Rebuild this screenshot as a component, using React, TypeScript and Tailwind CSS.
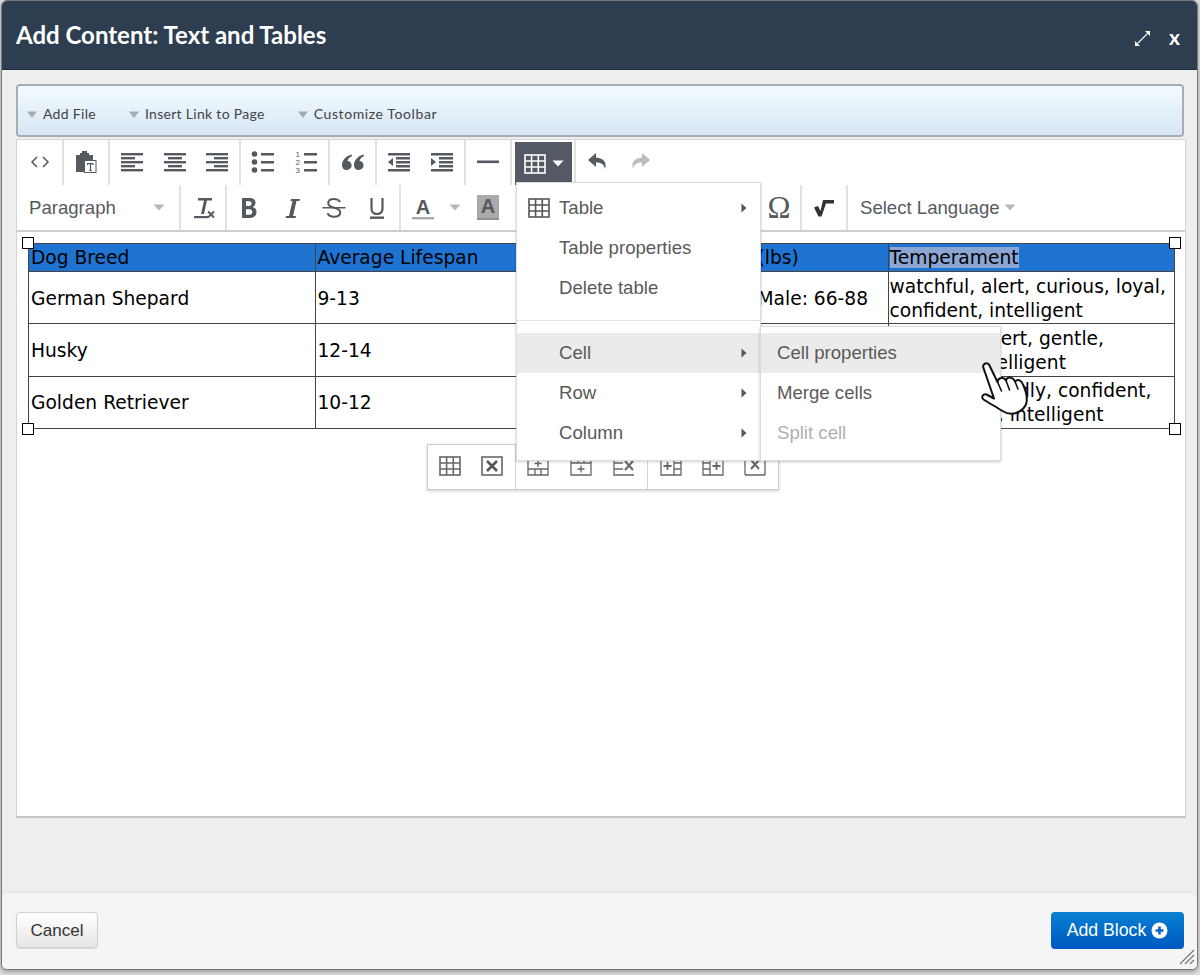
import React from "react";

const C = "#555a60";

function Ic({ w = 24, h = 24, children, className = "" }: { w?: number; h?: number; children: React.ReactNode; className?: string }) {
  return (
    <svg width={w} height={h} viewBox={`0 0 ${w} ${h}`} className={"block shrink-0 " + className}>
      {children}
    </svg>
  );
}

function Bars({ rows }: { rows: [number, number][] }) {
  return (
    <Ic w={24} h={24}>
      {rows.map(([x, w], i) => (
        <rect key={i} x={x} y={3 + i * 4} width={w} height={2.4} fill={C} />
      ))}
    </Ic>
  );
}

function Btn({ children, w = "w-[42.5px]", up = false }: { children: React.ReactNode; w?: string; up?: boolean }) {
  return <div className={`${w} h-full flex items-center justify-center shrink-0 ${up ? "pb-[2px]" : ""}`}>{children}</div>;
}

function Group({ children, className = "" }: { children: React.ReactNode; className?: string }) {
  return <div className={`flex justify-center h-full border-r-2 border-[#e2e2e2] shrink-0 ${className}`}>{children}</div>;
}

function Caret({ color = "#b3b9c0" }: { color?: string }) {
  return (
    <svg width="12" height="7" viewBox="0 0 12 7" className="block shrink-0">
      <path d="M0.5 0.5h11L6 6.5z" fill={color} />
    </svg>
  );
}

function Right() {
  return (
    <svg width="6" height="10" viewBox="0 0 6 10" className="block shrink-0">
      <path d="M0.5 0.5L5.5 5L0.5 9.5z" fill="#555" />
    </svg>
  );
}

function TableGlyph({ color = "#555", size = 22 }: { color?: string; size?: number }) {
  return (
    <svg width={size} height={size - 2} viewBox="0 0 22 20" className="block shrink-0" fill="none" stroke={color} strokeWidth="1.6">
      <rect x="1" y="1" width="20" height="18" />
      <path d="M1 7h20M1 13h20M7.6 1v18M14.3 1v18" />
    </svg>
  );
}

function MiniTable({ kind }: { kind: string }) {
  const s = "#666";
  const common = { fill: "none", stroke: s, strokeWidth: 1.3 };
  return (
    <svg width="22" height="20" viewBox="0 0 22 20" className="block shrink-0">
      {kind === "rowBefore" && (
        <g {...common}>
          <path d="M1 1v18h20V1M1 13h20M8 13v6M14 13v6" />
          <path d="M11 4v7M7.5 7.5h7" />
        </g>
      )}
      {kind === "rowAfter" && (
        <g {...common}>
          <path d="M1 1h20v18H1zM1 7h20M8 1v6M14 1v6" />
          <path d="M11 9.5v7M7.5 13h7" />
        </g>
      )}
      {kind === "rowDel" && (
        <g {...common}>
          <path d="M21 1H1v18h20M1 7h9M1 13h9" />
          <path d="M12 5l8 9M20 5l-8 9" strokeWidth="2" />
        </g>
      )}
      {kind === "colBefore" && (
        <g {...common}>
          <path d="M1 1h20v18H1zM14 1v18M14 7h7M14 13h7M1 1v18" />
          <path d="M7.5 6v8M3.5 10h8" strokeWidth="1.8" />
        </g>
      )}
      {kind === "colAfter" && (
        <g {...common}>
          <path d="M1 1h20v18H1zM8 1v18M1 7h7M1 13h7" />
          <path d="M14.5 6v8M10.5 10h8" strokeWidth="1.8" />
        </g>
      )}
      {kind === "colDel" && (
        <g {...common}>
          <path d="M1 19V1M21 19V1M1 19h20M1 1h4M17 1h4" />
          <path d="M7 4l8 9M15 4l-8 9" strokeWidth="2" />
        </g>
      )}
    </svg>
  );
}

function Row1() {
  return (
    <div className="flex h-[45px] items-stretch">
      <Group className="w-[47px]">
        <Btn up>
          <Ic w={20} h={14}>
            <path d="M7 2L2 7l5 5M13 2l5 5-5 5" fill="none" stroke={C} strokeWidth="1.6" />
          </Ic>
        </Btn>
      </Group>
      <Group className="w-[46px]">
        <Btn up>
          <Ic w={22} h={24}>
            <path d="M1 5h4V3h2V1h5v2h2v2h4v5h-8v12H1z" fill={C} />
            <rect x="9.5" y="10.5" width="11.5" height="12" fill="#fff" stroke={C} />
            <path d="M12 13h6.5v2h-1v-.8h-1.4v6h1v.9h-3.2v-.9h1v-6H13v.8h-1z" fill={C} />
          </Ic>
        </Btn>
      </Group>
      <Group className="w-[131px]">
        <Btn up><Bars rows={[[1, 22], [1, 14], [1, 22], [1, 14], [1, 22]]} /></Btn>
        <Btn up><Bars rows={[[1, 22], [5, 14], [1, 22], [5, 14], [1, 22]]} /></Btn>
        <Btn up><Bars rows={[[1, 22], [9, 14], [1, 22], [9, 14], [1, 22]]} /></Btn>
      </Group>
      <Group className="w-[89px]">
        <Btn up>
          <Ic w={24} h={24}>
            <circle cx="3.5" cy="4" r="2.8" fill={C} />
            <circle cx="3.5" cy="12" r="2.8" fill={C} />
            <circle cx="3.5" cy="20" r="2.8" fill={C} />
            <path d="M10 3h13v2.4H10zM10 11h13v2.4H10zM10 19h13v2.4H10z" fill={C} />
          </Ic>
        </Btn>
        <Btn up>
          <Ic w={24} h={24}>
            <g fontFamily="'Liberation Sans',sans-serif" fontSize="8" fill={C}>
              <text x="1.5" y="7">1</text>
              <text x="1.5" y="15">2</text>
              <text x="1.5" y="23">3</text>
            </g>
            <path d="M10 3h13v2.4H10zM10 11h13v2.4H10zM10 19h13v2.4H10z" fill={C} />
          </Ic>
        </Btn>
      </Group>
      <Group className="w-[47px]">
        <Btn up>
          <Ic w={24} h={18}>
            <path d="M10.5 1.5C5 3 1 7 1 12c0 3 2 5 4.8 5S10.6 15 10.6 12.3c0-2.500-1.800-4.400-4.200-4.400C7 5.800 8.800 4 11 3.200zM22.500 1.500C17 3 13 7 13 12c0 3 2 5 4.800 5s4.800-2 4.800-4.700c0-2.500-1.800-4.400-4.200-4.400C19 5.800 20.800 4 23 3.200z" fill={C} />
          </Ic>
        </Btn>
      </Group>
      <Group className="w-[89px]">
        <Btn up>
          <Ic w={24} h={24}>
            <path d="M1 3h22v2.400H1zM9 7h14v2.400H9zM9 11h14v2.400H9zM9 15h14v2.400H9zM1 19h22v2.400H1z" fill={C} />
            <path d="M6 8v8l-5-4z" fill={C} />
          </Ic>
        </Btn>
        <Btn up>
          <Ic w={24} h={24}>
            <path d="M1 3h22v2.400H1zM9 7h14v2.400H9zM9 11h14v2.400H9zM9 15h14v2.400H9zM1 19h22v2.400H1z" fill={C} />
            <path d="M1 8v8l5-4z" fill={C} />
          </Ic>
        </Btn>
      </Group>
      <Group className="w-[46px]">
        <Btn up>
          <Ic w={24} h={4}>
            <rect x="1" y="0.500" width="22" height="2.600" fill={C} />
          </Ic>
        </Btn>
      </Group>
      <div className="pl-[3px] pt-[2px] shrink-0 flex h-full">
        <div className="w-[57px] h-[43px] bg-[#535a65] flex items-center justify-center gap-[6px]">
          <TableGlyph color="#fff" size={22} />
          <Caret color="#fff" />
        </div>
      </div>
      <div className="ml-[2px] w-[2px] h-full bg-[#e2e2e2] shrink-0" />
      <Btn w="w-[44px]" up>
        <Ic w={22} h={22}>
          <path d="M9 2L1 9l8 7v-4.500c5 0 8 1.500 9 6.500 2-6-1-11-9-11.500z" fill={C} />
        </Ic>
      </Btn>
      <Btn w="w-[40px]" up>
        <Ic w={22} h={22}>
          <path d="M13 2l8 7-8 7v-4.500c-5 0-8 1.500-9 6.500-2-6 1-11 9-11.500z" fill="#b9bdc2" />
        </Ic>
      </Btn>
    </div>
  );
}

function Row2() {
  return (
    <div className="flex h-[45px] items-stretch border-b-2 border-[#cfcfcf] box-content text-[#555a60]">
      <div className="w-[164px] h-full border-r-2 border-[#e2e2e2] flex items-center shrink-0 pl-[12px] pr-[14px] justify-between font-['Liberation_Sans',sans-serif] text-[18.600px]">
        <span>Paragraph</span>
        <Caret />
      </div>
      <Group className="w-[46px]">
        <Btn>
          <Ic w={24} h={24}>
            <path d="M7 2h14v2.500h-5L13 18h-3l3-13.500H7z" fill={C} />
            <rect x="3" y="20" width="14" height="2.200" fill={C} />
            <path d="M17 15.500l6 6M23 15.500l-6 6" stroke={C} strokeWidth="1.800" />
          </Ic>
        </Btn>
      </Group>
      <Group className="w-[174px]">
        <Btn>
          <Ic w={18} h={22}>
            <path d="M2 1h7.500c4 0 6 1.700 6 4.800 0 2-1 3.500-2.800 4.200 2.300.6 3.800 2.300 3.800 4.900 0 3.600-2.500 6.100-6.800 6.100H2zm4 3.300v4.700h3c1.600 0 2.500-.9 2.500-2.400s-.9-2.300-2.500-2.300zm0 8v5.400h3.300c2 0 2.900-1 2.900-2.700 0-1.700-1-2.700-2.900-2.700z" fill={C} />
          </Ic>
        </Btn>
        <Btn>
          <Ic w={20} h={22}>
            <path d="M9 2h9l-.5 2h-3L11 19h3l-.5 2H3.500l.5-2h3L10.500 4h-2z" fill={C} />
          </Ic>
        </Btn>
        <Btn>
          <Ic w={24} h={22}>
            <path d="M18 5c-1-2-3-3-6-3-3.500 0-5.800 1.700-5.800 4.300 0 5.700 12 3.300 12 9 0 2.800-2.500 4.500-6.200 4.500-3.200 0-5.400-1.200-6.500-3.500" fill="none" stroke={C} strokeWidth="2" />
            <rect x="0.500" y="10" width="23" height="1.500" fill={C} />
          </Ic>
        </Btn>
        <Btn>
          <Ic w={20} h={22}>
            <path d="M4.500 1v10.500c0 3.500 2 5.500 5.500 5.500s5.500-2 5.500-5.500V1" fill="none" stroke={C} strokeWidth="2.200" />
            <rect x="3" y="19.500" width="14" height="2.400" fill={C} />
          </Ic>
        </Btn>
      </Group>
      <div className="ml-[11px] w-[24px] h-full flex items-center shrink-0">
        <Ic w={22} h={24}>
          <text x="11" y="18" textAnchor="middle" fontFamily="'Liberation Sans',sans-serif" fontWeight="700" fontSize="20" fill={C}>A</text>
          <rect x="0" y="21" width="22" height="2.400" fill="#a9a9a9" />
        </Ic>
      </div>
      <div className="ml-[13px] w-[14px] h-full flex items-center shrink-0">
        <Caret />
      </div>
      <div className="ml-[14px] h-full flex items-center shrink-0">
        <div className="w-[22px] h-[25px] bg-[#aaaaaa] flex flex-col items-center justify-between">
          <span className="font-['Liberation_Sans',sans-serif] font-bold text-[20px] leading-[23px] text-[#555a60]">A</span>
          <span className="w-full h-[2px] bg-[#8f8f8f]" />
        </div>
      </div>
      <div className="ml-[259px] w-[42px] h-full flex items-center justify-center shrink-0 border-r-2 border-[#e2e2e2] box-content">
        <span className="font-['Liberation_Serif',serif] text-[31px] text-[#555a60] leading-none">Ω</span>
      </div>
      <Group className="w-[46px]">
        <Btn>
          <Ic w={24} h={20}>
            <path d="M2 9.500l4-1.500 2.500 5L11 2h11v3.500h-8L9.500 18.500H6.500z" fill="#2f3338" />
          </Ic>
        </Btn>
      </Group>
      <div className="flex items-center pl-[12px] gap-[4px] font-['Liberation_Sans',sans-serif] text-[18.600px] shrink-0">
        <span>Select Language</span>
        <Caret />
      </div>
    </div>
  );
}

const Row = ({ a, b, c, d }: { a: string; b: string; c: string; d: React.ReactNode }) => (
  <tr className="h-[52.330px]">
    <td className="border border-[#444] px-[2px] pt-[2px] pb-0">{a}</td>
    <td className="border border-[#444] px-[2px] pt-[2px] pb-0">{b}</td>
    <td className="border border-[#444] pl-0 pr-[2px] pt-[2px] pb-0 whitespace-nowrap">{c}</td>
    <td className="border border-[#444] px-[1px] pt-[2px] pb-0 leading-[24px]">{d}</td>
  </tr>
);

function DocTable() {
  return (
    <table className="ml-[11px] mt-[11px] w-[1147px] table-fixed border-collapse font-['DejaVu_Sans',sans-serif] text-[18.667px] text-black leading-[24px]">
      <tbody>
        <tr className="h-[28px] bg-[#1f74d2]">
          <td className="border border-[#444] px-[2px] py-0">Dog Breed</td>
          <td className="border border-[#444] px-[2px] py-0">Average Lifespan</td>
          <td className="border border-[#444] px-[2px] py-0 whitespace-nowrap">Average Weight (lbs)</td>
          <td className="border border-[#444] px-[1px] py-0">
            <span className="bg-[#8aa6d4]">Temperament</span>
          </td>
        </tr>
        <Row a="German Shepard" b="9-13" c="Females: 50-70, Male: 66-88" d={<>watchful, alert, curious, loyal,<br />confident, intelligent</>} />
        <Row a="Husky" b="12-14" c="Female: 35-50" d={<>outgoing, alert, gentle,<br />friendly, intelligent</>} />
        <Row a="Golden Retriever" b="10-12" c="Female: 55-65" d={<>Reliable, friendly, confident,<br />trustworthy, intelligent</>} />
      </tbody>
    </table>
  );
}

function Handle({ className }: { className: string }) {
  return <div className={`absolute w-[12px] h-[12px] bg-white border border-black ${className}`} />;
}

function MenuItem({ label, icon, arrow, active, muted }: { label: string; icon?: React.ReactNode; arrow?: boolean; active?: boolean; muted?: boolean }) {
  return (
    <div className={`h-[40px] flex items-center ${active ? "bg-[#ebebeb]" : ""}`}>
      <div className="w-[42px] pl-[11px] shrink-0">{icon}</div>
      <span className={`flex-1 ${muted ? "text-[#b0b0b0]" : "text-[#595959]"}`}>{label}</span>
      {arrow && <div className="pr-[13px]"><Right /></div>}
    </div>
  );
}

function Hand() {
  return (
    <svg width="50" height="56" viewBox="0 0 50 56" className="absolute left-[963px] top-[220px]">
      <path
        d="M3.500 8C2 4.500 6 1.500 9 4.500L17.500 22C18 17.500 24 16.500 26 20.500C27 16.500 33 16.500 35 21.500C38 18.500 41.500 20.500 43 24.500C46 31 47.500 37 46.500 42.500C45.500 48 41 51 36 53C31 54.500 26.500 53.500 22.500 51C17 47.500 9 43 3.500 39.500C1 37.500 2.500 33.500 6.500 34.500L14 38.500z"
        fill="#fff"
        stroke="#111"
        strokeWidth="2"
        strokeLinejoin="round"
      />
      <path d="M17.500 22L21.500 31M26 20.500L29.500 30M35 21.500L38 29" fill="none" stroke="#111" strokeWidth="1.600" strokeLinecap="round" />
    </svg>
  );
}

function QuickItem({ label, wide = false }: { label: string; wide?: boolean }) {
  return (
    <div className="flex items-center gap-[6px]">
      <svg width="10" height="7" viewBox="0 0 10 7" className="block mt-[2px]">
        <path d="M0 0.500h10L5 7z" fill="#a4acb3" />
      </svg>
      <span className={wide ? "tracking-[0.600px]" : ""}>{label}</span>
    </div>
  );
}

export default function App() {
  return (
    <div className="w-[1200px] h-[975px] bg-[#dcdcdc] pl-[1px] pr-[2px] pt-[0px] pb-[5px] overflow-hidden">
      <div className="w-[1197px] h-[970px] border border-[#777] rounded-[6px] flex flex-col overflow-hidden bg-[#eeeeee] shadow-[0_2px_4px_rgba(0,0,0,0.3)]">
        <header className="h-[69px] bg-[#2c3e50] border-b border-[#1c2c3b] flex items-center justify-between pl-[14px] pr-[17px] shrink-0">
          <h1 className="font-['Lato',sans-serif] font-bold text-[24px] text-white">Add Content: Text and Tables</h1>
          <div className="flex items-center gap-[18px] pt-[6px]">
            <svg width="17" height="17" viewBox="0 0 17 17" className="block">
              <path d="M3.500 13.500L13.500 3.500" stroke="#fff" strokeWidth="1.100" />
              <path d="M11 1h5v5zM1 11v5h5z" fill="#fff" />
            </svg>
            <span className="font-['Lato',sans-serif] font-bold text-[21px] leading-none text-white -mt-[4px]">x</span>
          </div>
        </header>
        <main className="flex-1 min-h-0 pt-[14px] pl-[14px] pr-[10px]">
          <div className="w-[1168px] h-[53px] rounded-[4px] border-2 border-[#a8aeb3] bg-gradient-to-b from-[#f3fbff] to-[#d7e6f4] flex items-end pb-[11px] pl-[9px] gap-[33px] font-['Lato',sans-serif] text-[14px] tracking-[0.300px] text-[#444]">
            <QuickItem label="Add File" />
            <QuickItem label="Insert Link to Page" />
            <QuickItem label="Customize Toolbar" wide />
          </div>
          <div className="relative mt-[2px] w-[1170px] h-[679px] bg-white border border-[#d4d4d4] border-b-2 border-b-[#c4c4c4]">
            <Row1 />
            <Row2 />
            <DocTable />
            <Handle className="left-[5px] top-[97px]" />
            <Handle className="left-[1152px] top-[97px]" />
            <Handle className="left-[5px] top-[283px]" />
            <Handle className="left-[1152px] top-[283px]" />

            <div className="absolute left-[410px] top-[304px] w-[352px] h-[46px] bg-white border border-[#ccc] shadow-[0_1px_3px_rgba(0,0,0,0.2)] flex items-center">
              <div className="h-full w-[88px] flex items-center justify-center gap-[20px] border-r border-[#d4d4d4] pb-[2px] pr-[2px]">
                <TableGlyph color="#666" size={22} />
                <svg width="22" height="20" viewBox="0 0 22 20" className="block">
                  <rect x="1" y="1" width="20" height="18" fill="none" stroke="#666" strokeWidth="1.600" />
                  <path d="M6 5l10 10M16 5L6 15" stroke="#555" strokeWidth="2.600" />
                </svg>
              </div>
              <div className="h-full w-[132px] flex items-center justify-center gap-[21px] border-r border-[#d4d4d4] pb-[2px] pr-[2px]">
                <MiniTable kind="rowBefore" />
                <MiniTable kind="rowAfter" />
                <MiniTable kind="rowDel" />
              </div>
              <div className="h-full flex-1 flex items-center justify-center gap-[20px] pb-[2px]">
                <MiniTable kind="colBefore" />
                <MiniTable kind="colAfter" />
                <MiniTable kind="colDel" />
              </div>
            </div>

            <div className="absolute left-[499px] top-[42px] w-[245px] h-[279px] bg-white border border-[#dcdcdc] shadow-[0_1px_3px_rgba(0,0,0,0.18)] pt-[5px] font-['Liberation_Sans',sans-serif] text-[18.600px]">
              <MenuItem label="Table" arrow icon={<TableGlyph color="#555" size={22} />} />
              <MenuItem label="Table properties" />
              <MenuItem label="Delete table" />
              <div className="h-[1px] bg-[#e2e2e2] mt-[12px] mb-[12px]" />
              <MenuItem label="Cell" arrow active />
              <MenuItem label="Row" arrow />
              <MenuItem label="Column" arrow />
            </div>

            <div className="absolute left-[743px] top-[186px] w-[241px] h-[135px] bg-white border border-[#dcdcdc] shadow-[0_1px_3px_rgba(0,0,0,0.22)] pt-[6px] font-['Liberation_Sans',sans-serif] text-[18.600px]">
              <div className="h-[40px] flex items-center pl-[16px] bg-[#ebebeb] text-[#595959]">Cell properties</div>
              <div className="h-[40px] flex items-center pl-[16px] text-[#595959]">Merge cells</div>
              <div className="h-[40px] flex items-center pl-[16px] text-[#b0b0b0]">Split cell</div>
            </div>
            <Hand />
          </div>
        </main>
        <footer className="relative h-[77px] bg-[#f5f5f5] border-t border-[#e4e4e4] rounded-t-[6px] shrink-0 flex items-center justify-between pl-[14px] pr-[13px] pb-[2px] font-['Liberation_Sans',sans-serif]">
          <button className="w-[82px] h-[36px] pt-[1px] rounded-[4px] border border-[#d0d0d0] bg-gradient-to-b from-[#ffffff] to-[#e6e6e6] text-[17px] text-[#333] shadow-[0_1px_1px_rgba(0,0,0,0.12)]">Cancel</button>
          <button className="w-[133px] h-[37px] rounded-[4px] bg-gradient-to-b from-[#0b80d2] to-[#0058c0] text-[17.700px] text-white flex items-center justify-center gap-[5px]">
            Add Block
            <svg width="17" height="17" viewBox="0 0 17 17" className="block">
              <circle cx="8.500" cy="8.500" r="8" fill="#fff" />
              <path d="M8.500 4.500v8M4.500 8.500h8" stroke="#0a62c4" strokeWidth="2.600" />
            </svg>
          </button>
          <svg width="16" height="16" viewBox="0 0 16 16" className="absolute right-[2px] bottom-[4px]">
            <path d="M1 15L15 1M6 15l9-9M11 15l4-4" stroke="#777" strokeWidth="1.200" />
          </svg>
        </footer>
      </div>
    </div>
  );
}
